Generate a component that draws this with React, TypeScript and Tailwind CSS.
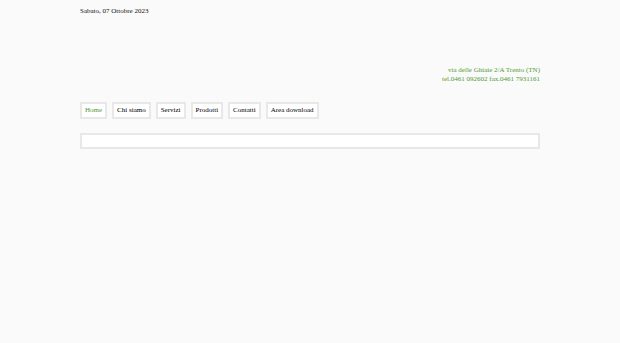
import React from 'react';

const links = ['Home', 'Chi siamo', 'Servizi', 'Prodotti', 'Contatti', 'Area download'];

const App: React.FC = () => {
  return (
    <div className="min-h-[343px] bg-[#fafafa] font-['Liberation_Serif',serif] text-[7px] leading-[9px] text-[#222]">
      <div className="mx-auto w-[460px] pt-[7px]">
        <div className="text-[#111]">Sabato, 07 Ottobre 2023</div>

        <div className="mt-[50px] text-right text-[#4f9a36]">
          <div>via delle Ghiaie 2/A Trento (TN)</div>
          <div>tel.0461 092602 fax.0461 7931161</div>
        </div>

        <nav className="mt-[18px] flex gap-[5px]">
          {links.map((l, i) => (
            <a
              key={l}
              className={`flex h-[17px] items-center border-2 border-[#e8e8e8] bg-white px-[3px] ${
                i === 0 ? 'text-[#4f9a36]' : 'text-[#000]'
              }`}
            >
              {l}
            </a>
          ))}
        </nav>

        <div className="mt-[14px] h-[16px] border-2 border-[#e8e8e8] bg-white" />
      </div>
    </div>
  );
};

export default App;
